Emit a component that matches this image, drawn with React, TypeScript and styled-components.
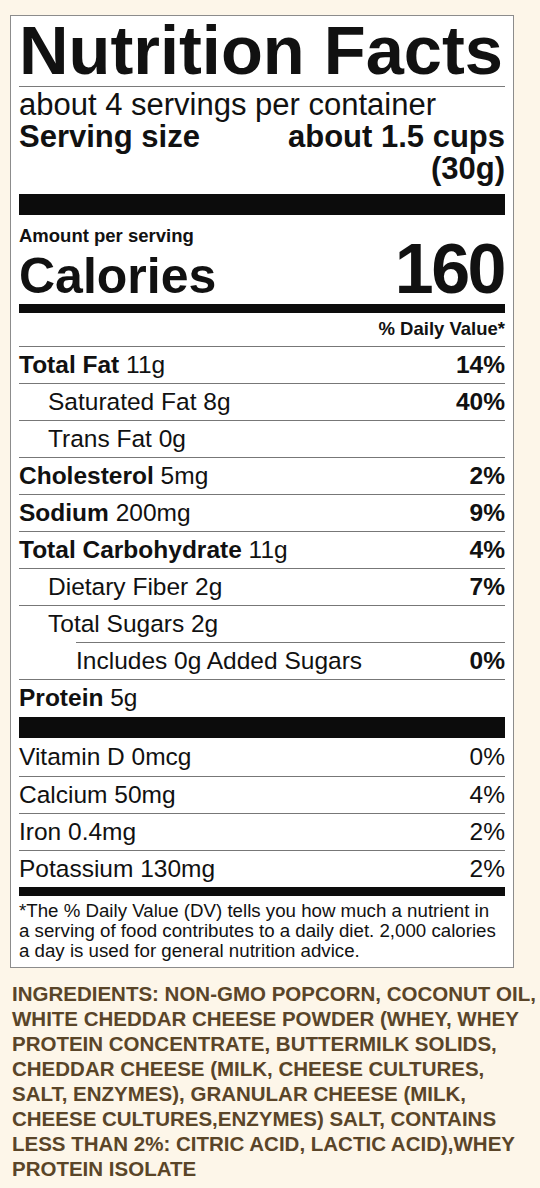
import React from "react";
import styled, { createGlobalStyle } from "styled-components";

const GlobalStyle = createGlobalStyle`
  html, body {
    margin: 0;
    padding: 0;
    background: #fdf6e9;
  }
  body {
    font-family: "Liberation Sans", Arial, Helvetica, sans-serif;
    color: #111;
  }
`;

const Page = styled.div`
  padding: 15px 0 20px 10px;
  min-height: 1188px;
  box-sizing: border-box;
`;

const Label = styled.section`
  width: 504px;
  box-sizing: border-box;
  background: #fff;
  border: 1px solid #8c8c8c;
  padding: 0 8px;
  display: flex;
  flex-direction: column;
`;

const Title = styled.h1`
  margin: 0;
  font-size: 68.6px;
  font-weight: 700;
  line-height: 70px;
  white-space: nowrap;
  border-bottom: 1px solid #7a7a7a;
`;

const Servings = styled.div`
  margin-top: 2px;
  font-size: 31px;
  line-height: 32px;
`;

const ServingRow = styled.div`
  display: flex;
  justify-content: space-between;
  align-items: flex-start;
  font-size: 31px;
  line-height: 32px;
  font-weight: 700;
`;

const ServingValue = styled.div`
  display: flex;
  flex-direction: column;
  align-items: flex-end;
`;

const Bar = styled.div<{ $h: number; $mt?: number }>`
  height: ${(p) => p.$h}px;
  margin-top: ${(p) => p.$mt ?? 0}px;
  background: #0c0c0c;
`;

const AmountLabel = styled.div`
  padding-top: 10px;
  font-size: 18.5px;
  line-height: 21px;
  font-weight: 700;
`;

const CaloriesRow = styled.div`
  display: flex;
  justify-content: space-between;
  align-items: baseline;
  height: 53px;
  font-weight: 700;
`;

const CaloriesLabel = styled.span`
  font-size: 50px;
  line-height: 46px;
`;

const CaloriesValue = styled.span`
  font-size: 70px;
  line-height: 46px;
  letter-spacing: -2.5px;
  margin-right: 1px;
`;

const DVHeader = styled.div`
  padding: 5px 0 7px;
  text-align: right;
  font-size: 18.5px;
  line-height: 21px;
  font-weight: 700;
`;

const Row = styled.div<{ $indent: number; $insetRule?: boolean; $noRule?: boolean; $h?: number }>`
  display: flex;
  justify-content: space-between;
  align-items: center;
  height: ${(p) => p.$h ?? 36}px;
  font-size: 24.5px;
  line-height: 28px;
  border-top: ${(p) => (p.$noRule ? "none" : "1px solid #777")};
  margin-left: ${(p) => (p.$insetRule ? p.$indent : 0)}px;
  padding-left: ${(p) => (p.$insetRule ? 0 : p.$indent)}px;
`;

const Bold = styled.b`
  font-weight: 700;
`;

const Pct = styled.span<{ $bold?: boolean }>`
  font-weight: ${(p) => (p.$bold ? 700 : 400)};
`;

const Footnote = styled.p`
  margin: 0;
  padding: 5px 0 6px;
  font-size: 18.7px;
  line-height: 20px;
`;

const Ingredients = styled.p`
  margin: 13px 0 0;
  padding-left: 2px;
  width: 528px;
  font-size: 20.5px;
  line-height: 25px;
  font-weight: 700;
  color: #5a4528;
`;

type Nutrient = {
  label?: string;
  amount: string;
  pct?: string;
  indent: number;
  insetRule?: boolean;
};

const nutrients: Nutrient[] = [
  { label: "Total Fat", amount: "11g", pct: "14%", indent: 0 },
  { amount: "Saturated Fat 8g", pct: "40%", indent: 29 },
  { amount: "Trans Fat 0g", indent: 29 },
  { label: "Cholesterol", amount: "5mg", pct: "2%", indent: 0 },
  { label: "Sodium", amount: "200mg", pct: "9%", indent: 0 },
  { label: "Total Carbohydrate", amount: "11g", pct: "4%", indent: 0 },
  { amount: "Dietary Fiber 2g", pct: "7%", indent: 29 },
  { amount: "Total Sugars 2g", indent: 29 },
  { amount: "Includes 0g Added Sugars", pct: "0%", indent: 57, insetRule: true },
  { label: "Protein", amount: "5g", indent: 0 },
];

const vitamins = [
  { name: "Vitamin D 0mcg", pct: "0%" },
  { name: "Calcium 50mg", pct: "4%" },
  { name: "Iron 0.4mg", pct: "2%" },
  { name: "Potassium 130mg", pct: "2%" },
];

export default function App() {
  return (
    <>
      <GlobalStyle />
      <Page>
        <Label>
          <Title>Nutrition Facts</Title>
          <Servings>about 4 servings per container</Servings>
          <ServingRow>
            <span>Serving size</span>
            <ServingValue>
              <span>about 1.5 cups</span>
              <span>(30g)</span>
            </ServingValue>
          </ServingRow>
          <Bar $h={21} $mt={9} />
          <AmountLabel>Amount per serving</AmountLabel>
          <CaloriesRow>
            <CaloriesLabel>Calories</CaloriesLabel>
            <CaloriesValue>160</CaloriesValue>
          </CaloriesRow>
          <Bar $h={9} $mt={5} />
          <DVHeader>% Daily Value*</DVHeader>
          {nutrients.map((n, i) => (
            <Row key={i} $indent={n.indent} $insetRule={n.insetRule}>
              <span>
                {n.label ? (
                  <>
                    <Bold>{n.label}</Bold> {n.amount}
                  </>
                ) : (
                  n.amount
                )}
              </span>
              {n.pct && <Pct $bold>{n.pct}</Pct>}
            </Row>
          ))}
          <Bar $h={21} $mt={1} />
          {vitamins.map((v, i) => (
            <Row key={v.name} $indent={0} $noRule={i === 0} $h={i === 0 ? 38 : 36}>
              <span>{v.name}</span>
              <Pct>{v.pct}</Pct>
            </Row>
          ))}
          <Bar $h={9} />
          <Footnote>
            *The % Daily Value (DV) tells you how much a nutrient in
            <br />a serving of food contributes to a daily diet. 2,000 calories
            <br />a day is used for general nutrition advice.
          </Footnote>
        </Label>
        <Ingredients>
          INGREDIENTS: NON-GMO POPCORN, COCONUT OIL, WHITE CHEDDAR CHEESE POWDER
          (WHEY, WHEY PROTEIN CONCENTRATE, BUTTERMILK SOLIDS, CHEDDAR CHEESE (MILK,
          CHEESE CULTURES, SALT, ENZYMES), GRANULAR CHEESE (MILK, CHEESE
          CULTURES,ENZYMES) SALT, CONTAINS LESS THAN 2%: CITRIC ACID, LACTIC
          ACID),WHEY PROTEIN ISOLATE
        </Ingredients>
      </Page>
    </>
  );
}
